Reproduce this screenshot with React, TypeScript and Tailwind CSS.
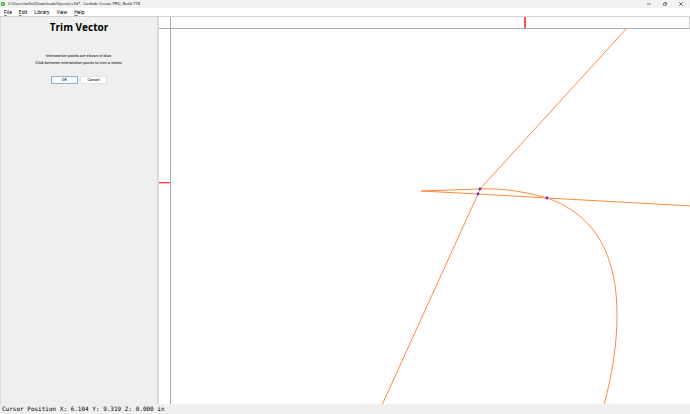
import { useState } from "react";

const menus = ["File", "Edit", "Library", "View", "Help"];

const vectors = [
    "M456 -1 L309 160 L307 165 L211 376",
    "M250 162 L307 160 C325 159 348 161 376 169 C434 189 446 241 446 286 C446 316 441 346 433 376",
    "M250 162 L307 165 L376 169 L900 198",
];

const intersections = [
    { x: 309, y: 160 },
    { x: 307, y: 165 },
    { x: 376, y: 169 },
];

function TitleBar() {
    return (
        <header className="flex h-2 shrink-0 items-center justify-between bg-[#f2f2f2] pl-px">
            <div className="flex items-center gap-[3px]">
                <svg className="size-1" viewBox="0 0 10 10" fill="none" stroke="#35a72c" strokeWidth="2.8">
                    <path d="M8.4 2.7A4 4 0 1 0 8.6 7V5.4H5.4" />
                </svg>
                <h1 className="whitespace-nowrap text-[4px] leading-[8px] text-black">
                    C:\Users\willa\Downloads\Special.c2d* - Carbide Create PRO, Build 778
                </h1>
            </div>
            <div className="flex items-center gap-3 pr-[7px]">
                <button type="button" aria-label="Minimize">
                    <svg className="block size-[4px]" viewBox="0 0 4 4" stroke="#333" strokeWidth="0.6">
                        <path d="M0 2H4" />
                    </svg>
                </button>
                <button type="button" aria-label="Restore">
                    <svg className="block size-[4px]" viewBox="0 0 8 8" fill="none" stroke="#222" strokeWidth="1.1">
                        <rect x="0.8" y="2.2" width="5" height="5" rx="1" />
                        <path d="M2.6 0.8H6.2Q7.3 0.8 7.3 2V5.6" />
                    </svg>
                </button>
                <button type="button" aria-label="Close">
                    <svg className="block size-[4px]" viewBox="0 0 4 4" stroke="#222" strokeWidth="0.6">
                        <path d="M0.2 0.2L3.8 3.8M3.8 0.2L0.2 3.8" />
                    </svg>
                </button>
            </div>
        </header>
    );
}

function MenuBar() {
    return (
        <nav className="flex h-2 shrink-0 items-center gap-[7px] bg-white pl-1">
            {menus.map((menu) => (
                <button key={menu} type="button" className="font-['Roboto',sans-serif] text-[5px] leading-[8px] text-black">
                    {menu === "Library" || menu === "View" ? (
                        menu
                    ) : (
                        <>
                            <span className="underline decoration-black/50 decoration-1">{menu[0]}</span>
                            {menu.slice(1)}
                        </>
                    )}
                </button>
            ))}
        </nav>
    );
}

function TrimPanel({ onClose }: { onClose: () => void }) {
    return (
        <aside className="flex w-[159px] shrink-0 flex-col items-center border-r-2 border-l border-[#d9d9d9] bg-[#efefef] text-center text-black">
            <h2 className="mt-1 text-[10px] leading-[12px] font-bold">Trim Vector</h2>
            <p className="mt-[19px] font-['Roboto',sans-serif] text-[4px] leading-[7px]">
                Intersection points are shown in blue.
                <br />
                Click between intersection points to trim a vector.
            </p>
            <div className="mt-[10px] flex gap-[2px] font-['Roboto',sans-serif] text-[4px] leading-[6px]">
                <button type="button" onClick={onClose} className="h-2 w-[27px] border border-[#7db4e0] bg-[#fdfdfd]">
                    OK
                </button>
                <button type="button" onClick={onClose} className="h-2 w-[27px] border border-[#e3e3e3] bg-[#fdfdfd]">
                    Cancel
                </button>
            </div>
        </aside>
    );
}

function Workspace({ trimming }: { trimming: boolean }) {
    return (
        <main className="grid min-w-0 flex-1 grid-cols-[12px_1fr] grid-rows-[12px_1fr] bg-white">
            <div className="border-r border-b border-[#aaa]" />
            {/* Horizontal ruler */}
            <div className="border-r border-b border-r-[#d0d0d0] border-b-[#aaa]">
                <svg className="block h-full w-full" fill="#ff4d4d">
                    <rect x="353" y="0" width="2" height="11" />
                </svg>
            </div>
            {/* Vertical ruler */}
            <div className="border-r border-[#aaa]">
                <svg className="block h-full w-full">
                    <rect x="0" y="153" width="12" height="1" fill="#ff4444" />
                    <rect x="0" y="154" width="12" height="1" fill="#ffb3b3" />
                </svg>
            </div>
            <svg className="block h-full w-full" fill="none" stroke="#ff8a3c" strokeWidth="1">
                {vectors.map((d) => (
                    <path key={d} d={d} />
                ))}
                {trimming &&
                    intersections.map(({ x, y }) => (
                        <circle key={`${x}-${y}`} cx={x} cy={y} r="1.4" fill="#5a35c4" stroke="none" />
                    ))}
            </svg>
        </main>
    );
}

export default function App() {
    const [trimming, setTrimming] = useState(true);

    return (
        <div className="flex h-screen flex-col overflow-hidden bg-white font-['Open_Sans',sans-serif]">
            <TitleBar />
            <MenuBar />
            <div className="flex min-h-0 flex-1 border-t border-[#d2d2d6]">
                <TrimPanel onClose={() => setTrimming(false)} />
                <Workspace trimming={trimming} />
            </div>
            <footer className="h-[10px] shrink-0 bg-[#efefef] pl-[2px] font-['DejaVu_Sans_Mono',monospace] text-[6px] leading-[10px] whitespace-nowrap text-black">
                Cursor Position X: 6.104 Y: 9.319 Z: 0.000 in
            </footer>
        </div>
    );
}
